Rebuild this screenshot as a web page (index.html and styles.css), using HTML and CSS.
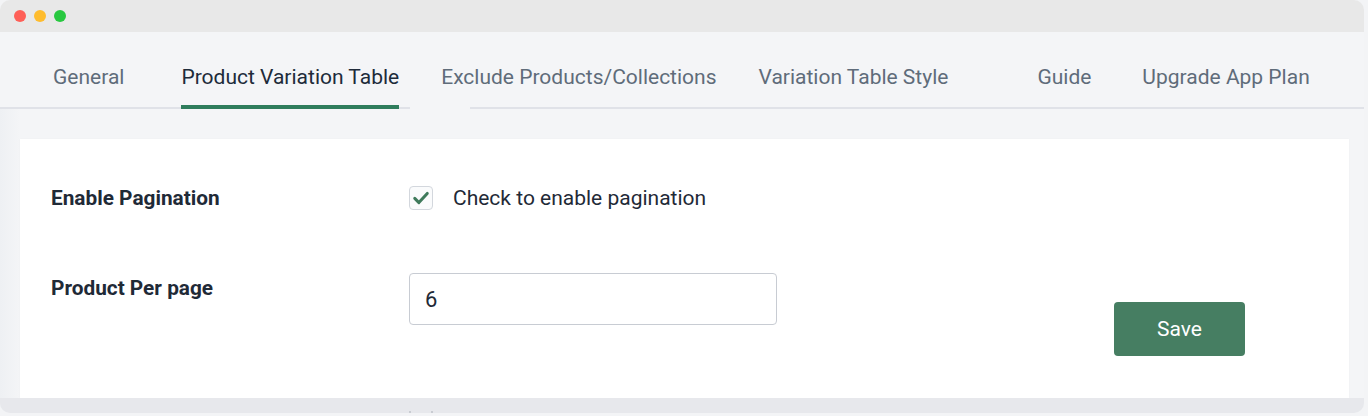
FILE: index.html
```html
<!DOCTYPE html>
<html>
<head>
<meta charset="utf-8">
<link rel="stylesheet" href="styles.css">
</head>
<body>
<div class="window">
  <div class="titlebar">
    <span class="dot red"></span>
    <span class="dot yellow"></span>
    <span class="dot green"></span>
  </div>
  <div class="content">
    <nav class="tabs">
      <a class="tab t-general">General</a>
      <a class="tab active t-pvt">Product Variation Table</a>
      <a class="tab t-exclude">Exclude Products/Collections</a>
      <a class="tab t-style">Variation Table Style</a>
      <a class="tab t-guide">Guide</a>
      <a class="tab t-upgrade">Upgrade App Plan</a>
    </nav>
    <div class="main">
      <section class="card">
        <div class="row row-check">
          <div class="label">Enable Pagination</div>
          <label class="check">
            <span class="box">
              <svg viewBox="0 0 24 24" width="20" height="20"><polyline points="4.5,12.5 9.5,17.5 19.5,6.5" fill="none" stroke="#3f7a5b" stroke-width="3.6" stroke-linecap="round" stroke-linejoin="round"/></svg>
            </span>
            <span class="check-text">Check to enable pagination</span>
          </label>
        </div>
        <div class="row row-input">
          <div class="label label-input">Product Per page</div>
          <div class="input">6</div>
          <button class="save">Save</button>
        </div>
      </section>
      <div class="below">
        <span class="peek"></span><span class="peek"></span>
      </div>
    </div>
  </div>
</div>
</body>
</html>
```
FILE: styles.css
```css
* { box-sizing: border-box; }
html, body { margin: 0; padding: 0; }
body {
  width: 1368px;
  height: 416px;
  overflow: hidden;
  background: #f3f4f6;
  font-family: Roboto, "Liberation Sans", Arial, sans-serif;
}
.window {
  width: 1364px;
  height: 413px;
  border-radius: 10px;
  overflow: hidden;
  background: #f4f5f7;
  display: flex;
  flex-direction: column;
}
.titlebar {
  height: 32px;
  background: #e8e8e8;
  display: flex;
  align-items: center;
  padding-left: 14px;
  gap: 8px;
  flex: none;
}
.dot {
  width: 12px;
  height: 12px;
  border-radius: 50%;
  display: block;
}
.red { background: #fe5f57; }
.yellow { background: #febc2e; }
.green { background: #28c840; }
.content {
  flex: 1;
  display: flex;
  flex-direction: column;
}
.tabs {
  height: 77px;
  display: flex;
  padding-left: 53px;
  background: linear-gradient(to right, #e0e2e8 0, #e0e2e8 410px, transparent 410px, transparent 470px, #e0e2e8 470px) left bottom / 100% 2px no-repeat;
  flex: none;
}
.tab {
  font-size: 21px;
  line-height: 24px;
  color: #5f6c7a;
  padding-top: 33px;
  white-space: nowrap;
  border-bottom: 4px solid transparent;
}
.tab.active {
  color: #202b3a;
  border-bottom-color: #2f7d5c;
}
.t-general { margin-right: 57px; }
.t-pvt { margin-right: 42px; }
.t-exclude { margin-right: 42px; }
.t-style { margin-right: 89px; }
.t-guide { margin-right: 51px; }
.main {
  flex: 1;
  padding: 30px 15px 0 20px;
  display: flex;
  flex-direction: column;
  background: linear-gradient(to right, #eef0f3, #f4f5f7 20px);
}
.card {
  background: #ffffff;
  width: 1329px;
  padding: 47px 31px 42px;
  box-shadow: 0 0 2px rgba(0,0,0,0.03);
}
.row {
  display: flex;
}
.label {
  width: 358px;
  flex: none;
  font-size: 20.8px;
  font-weight: 700;
  color: #1f2a37;
}
.row-check {
  align-items: center;
  height: 24px;
}
.check {
  display: flex;
  align-items: center;
  gap: 20px;
}
.box {
  width: 24px;
  height: 24px;
  border: 1px solid #d3d7dd;
  border-radius: 4px;
  display: flex;
  align-items: center;
  justify-content: center;
  background: #fafbfc;
}
.check-text {
  font-size: 21px;
  color: #1f2a37;
}
.row-input {
  margin-top: 63px;
  align-items: flex-start;
}
.label-input {
  padding-top: 3px;
}
.input {
  width: 368px;
  height: 52px;
  border: 1px solid #c8ccd3;
  border-radius: 4px;
  padding-left: 15px;
  font-size: 22px;
  color: #1f2a37;
  display: flex;
  align-items: center;
}
.save {
  margin-left: 337px;
  margin-top: 29px;
  width: 131px;
  height: 54px;
  border: none;
  border-radius: 4px;
  background: #467e62;
  color: #ffffff;
  font-family: Roboto, "Liberation Sans", Arial, sans-serif;
  font-size: 21px;
}
.below {
  flex: 1;
  margin-left: -20px;
  margin-right: -15px;
  background: #e7e8ec;
  display: flex;
  align-items: flex-end;
  padding-left: 409px;
  gap: 20px;
}
.peek {
  width: 2px;
  height: 2px;
  background: #c9ccd2;
}
```
